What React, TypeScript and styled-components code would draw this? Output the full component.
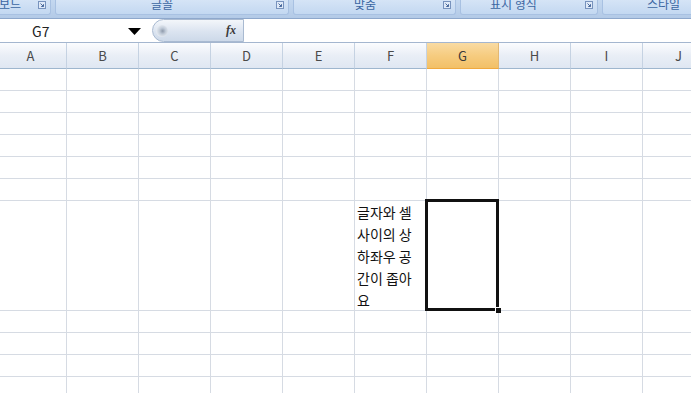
import styled, { createGlobalStyle } from 'styled-components';

const GlobalStyle = createGlobalStyle`
  html, body {
    margin: 0;
    padding: 0;
    background: #fff;
    overflow: hidden;
  }
  body {
    font-family: 'Noto Sans CJK KR', 'Noto Sans', sans-serif;
  }
`;

const Window = styled.div`
  width: 691px;
  height: 393px;
  overflow: hidden;
  display: flex;
  flex-direction: column;
  background: #fff;
`;

/* ribbon bottom strip (group captions) */
const Ribbon = styled.div`
  flex: none;
  height: 19px;
  box-sizing: border-box;
  display: flex;
  gap: 4px;
  overflow: hidden;
  background: linear-gradient(#c4d8f0, #b3cae7);
  border-bottom: 1px solid #8ea8cc;
`;

const RibbonGroup = styled.div<{ $width: number; $shift?: number }>`
  flex: none;
  position: relative;
  width: ${(p) => p.$width}px;
  margin-left: ${(p) => p.$shift || 0}px;
  height: 15px;
  box-sizing: border-box;
  display: flex;
  align-items: flex-end;
  overflow: hidden;
  background: linear-gradient(#d5e4f6, #c3d8f1);
  border: 1px solid #a8c1e2;
  border-top: none;
  border-radius: 0 0 3px 3px;
`;

const GroupLabel = styled.span<{ $left: number }>`
  position: absolute;
  left: ${(p) => p.$left}px;
  bottom: 0;
  font-size: 12px;
  line-height: 20px;
  height: 20px;
  white-space: nowrap;
  color: #3b66a2;
`;

const Launcher = styled.svg`
  position: absolute;
  right: 4px;
  top: 1px;
  width: 8px;
  height: 8px;
`;

const FormulaBar = styled.div`
  flex: none;
  height: 24px;
  box-sizing: border-box;
  display: flex;
  align-items: stretch;
  background: #fff;
  border-bottom: 1px solid #a4b6cf;
`;

const NameBox = styled.div`
  flex: none;
  width: 152px;
  display: flex;
  align-items: center;
  box-sizing: border-box;
  padding-left: 32px;
  padding-right: 11px;
  font-size: 14px;
  color: #222;
`;

const NameText = styled.span`
  flex: 1;
`;

const DropArrow = styled.svg`
  width: 13px;
  height: 7px;
  margin-top: 1px;
`;

const FxPill = styled.div`
  flex: none;
  width: 92px;
  box-sizing: border-box;
  display: flex;
  align-items: center;
  justify-content: space-between;
  padding: 0 7px 0 3px;
  border-radius: 12px 0 0 12px;
  background: linear-gradient(#f3f6fa, #dbe4f0 55%, #cdd9e9);
  border: 1px solid #a9bad1;
`;

const Knob = styled.span`
  width: 12px;
  height: 12px;
  border-radius: 50%;
  background: radial-gradient(circle at 55% 50%, #8e9aab 0, #c2ccd9 35%, #eef2f7 80%);
`;

const Fx = styled.span`
  font-family: 'Liberation Serif', serif;
  font-style: italic;
  font-weight: bold;
  font-size: 12px;
  color: #3a3a3a;
`;

const FormulaInput = styled.div`
  flex: 1;
  background: #fff;
`;

const SheetView = styled.div`
  flex: 1;
  overflow: hidden;
`;

const Grid = styled.div`
  display: grid;
  margin-left: -5px;
  grid-template-columns: repeat(10, 72px);
  grid-template-rows: 26px repeat(6, 22px) 110px repeat(4, 22px);
`;

const HeaderCell = styled.div<{ $active?: boolean }>`
  box-sizing: border-box;
  display: flex;
  align-items: center;
  justify-content: center;
  font-size: 13px;
  color: ${(p) => (p.$active ? '#3a3a3a' : '#4a4a4a')};
  border-right: 1px solid ${(p) => (p.$active ? '#e2b874' : '#c5d2e2')};
  border-bottom: 1px solid ${(p) => (p.$active ? '#f0a93e' : '#9eb6ce')};
  background: ${(p) =>
    p.$active
      ? 'linear-gradient(#f9dba3, #f6cc80 50%, #f2c067)'
      : 'linear-gradient(#fbfcfe, #e9eef6 50%, #dfe7f2)'};
`;

const Cell = styled.div`
  position: relative;
  box-sizing: border-box;
  border-right: 1px solid #d6dbe3;
  border-bottom: 1px solid #d6dbe3;
  background: #fff;
`;

const WrapText = styled.div`
  padding: 0 2px;
  font-size: 14px;
  line-height: 22px;
  color: #111;
  white-space: nowrap;
`;

const Selection = styled.div`
  position: absolute;
  left: -2px;
  top: -2px;
  right: -1px;
  bottom: -1px;
  border: 3px solid #111;
  pointer-events: none;
  z-index: 2;
`;

const FillHandle = styled.span`
  position: absolute;
  right: -5px;
  bottom: -5px;
  width: 5px;
  height: 5px;
  background: #111;
  border: 1px solid #fff;
  border-right: none;
  border-bottom: none;
`;

const columns = ['A', 'B', 'C', 'D', 'E', 'F', 'G', 'H', 'I', 'J'];
const rowCount = 11;
const activeCol = 6;
const activeRow = 6;
const textCol = 5;

const wrapped = ['글자와 셀', '사이의 상', '하좌우 공', '간이 좁아', '요'];

const groups = [
  { label: '클립보드', width: 79, shift: -28, left: 4 },
  { label: '글꼴', width: 234, left: 95 },
  { label: '맞춤', width: 163, left: 60 },
  { label: '표시 형식', width: 138, left: 29 },
  { label: '스타일', width: 120, left: 44, noLauncher: true },
];

const LauncherIcon = () => (
  <Launcher viewBox="0 0 8 8">
    <rect x="0.5" y="0.5" width="7" height="7" fill="#dfe9f7" stroke="#7893bd" />
    <path d="M2.5 2.5 L5.5 5.5 M5.5 3.2 V5.5 H3.2" stroke="#4a6a9c" strokeWidth="1" fill="none" />
  </Launcher>
);

export default function App() {
  return (
    <Window>
      <GlobalStyle />
      <Ribbon>
        {groups.map((g) => (
          <RibbonGroup key={g.label} $width={g.width} $shift={g.shift}>
            <GroupLabel $left={g.left}>{g.label}</GroupLabel>
            {!g.noLauncher && <LauncherIcon />}
          </RibbonGroup>
        ))}
      </Ribbon>

      <FormulaBar>
        <NameBox>
          <NameText>G7</NameText>
          <DropArrow viewBox="0 0 13 7">
            <path d="M0 0 H13 L6.5 7 Z" fill="#000" />
          </DropArrow>
        </NameBox>
        <FxPill>
          <Knob />
          <Fx>fx</Fx>
        </FxPill>
        <FormulaInput />
      </FormulaBar>

      <SheetView>
        <Grid>
          {columns.map((c, i) => (
            <HeaderCell key={c} $active={i === activeCol}>
              {c}
            </HeaderCell>
          ))}
          {Array.from({ length: rowCount }).map((_, r) =>
            columns.map((c, i) => (
              <Cell key={`${c}${r + 1}`}>
                {r === activeRow && i === textCol && (
                  <WrapText>
                    {wrapped.map((line) => (
                      <div key={line}>{line}</div>
                    ))}
                  </WrapText>
                )}
                {r === activeRow && i === activeCol && (
                  <Selection>
                    <FillHandle />
                  </Selection>
                )}
              </Cell>
            ))
          )}
        </Grid>
      </SheetView>
    </Window>
  );
}
